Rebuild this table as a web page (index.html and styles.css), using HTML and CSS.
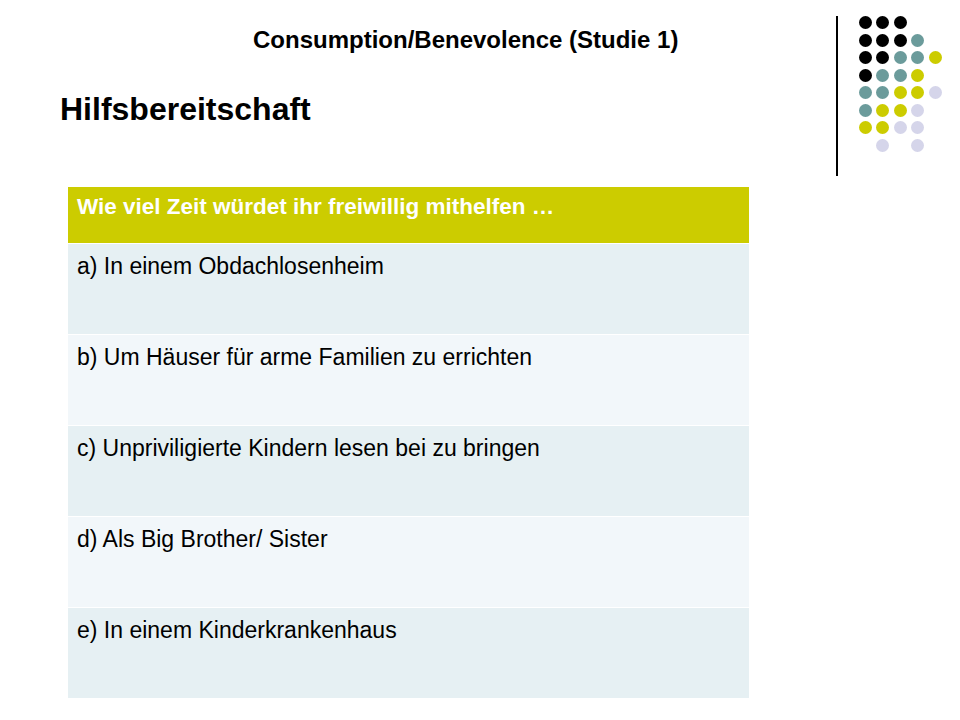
FILE: index.html
```html
<!DOCTYPE html>
<html lang="de">
<head>
<meta charset="utf-8">
<title>Consumption/Benevolence (Studie 1)</title>
<link rel="stylesheet" href="styles.css">
</head>
<body>
<div class="slide">
  <header class="top">
    <div class="titles">
      <h2 class="subtitle"><span class="txt">Consumption/Benevolence (Studie 1)</span></h2>
      <h1 class="title"><span class="txt">Hilfsbereitschaft</span></h1>
    </div>
    <div class="deco">
      <div class="vline"></div>
      <div class="dots">
        <span class="d k"></span><span class="d k"></span><span class="d k"></span><span class="d"></span><span class="d"></span>
        <span class="d k"></span><span class="d k"></span><span class="d k"></span><span class="d t"></span><span class="d"></span>
        <span class="d k"></span><span class="d k"></span><span class="d t"></span><span class="d t"></span><span class="d y"></span>
        <span class="d k"></span><span class="d t"></span><span class="d t"></span><span class="d y"></span><span class="d"></span>
        <span class="d t"></span><span class="d t"></span><span class="d y"></span><span class="d y"></span><span class="d l"></span>
        <span class="d t"></span><span class="d y"></span><span class="d y"></span><span class="d l"></span><span class="d"></span>
        <span class="d y"></span><span class="d y"></span><span class="d l"></span><span class="d l"></span><span class="d"></span>
        <span class="d"></span><span class="d l"></span><span class="d"></span><span class="d l"></span><span class="d"></span>
      </div>
    </div>
  </header>
  <div class="table">
    <div class="row head"><span class="txt">Wie viel Zeit würdet ihr freiwillig mithelfen …</span></div>
    <div class="row odd"><span class="txt">a) In einem Obdachlosenheim</span></div>
    <div class="row even"><span class="txt">b) Um Häuser für arme Familien zu errichten</span></div>
    <div class="row odd"><span class="txt">c) Unpriviligierte Kindern lesen bei zu bringen</span></div>
    <div class="row even"><span class="txt">d) Als Big Brother/ Sister</span></div>
    <div class="row odd"><span class="txt">e) In einem Kinderkrankenhaus</span></div>
  </div>
</div>
</body>
</html>
```

FILE: styles.css
```css
html, body {
  margin: 0;
  padding: 0;
  background: #ffffff;
}
body {
  font-family: "Liberation Sans", Arial, sans-serif;
  color: #000;
}
.slide {
  width: 960px;
  height: 720px;
  position: relative;
  overflow: hidden;
}
.txt {
  display: inline-block;
  white-space: nowrap;
}
.top {
  display: flex;
  height: 187px;
}
.titles {
  width: 776px;
}
.subtitle {
  margin: 26px 0 0 0;
  padding-left: 253px;
  font-size: 24px;
  line-height: 28px;
  font-weight: bold;
}
.title {
  margin: 37px 0 0 0;
  padding-left: 60px;
  font-size: 32px;
  line-height: 37px;
  font-weight: bold;
}
.deco {
  display: flex;
  padding-top: 16px;
}
.vline {
  width: 1.5px;
  height: 160px;
  background: #000;
  margin-left: 60px;
}
.dots {
  display: grid;
  grid-template-columns: repeat(5, 13px);
  grid-auto-rows: 13px;
  column-gap: 4.6px;
  row-gap: 4.5px;
  margin-left: 21px;
}
.d {
  width: 13px;
  height: 13px;
  border-radius: 50%;
}
.d.k { background: #000000; }
.d.t { background: #6b9b9b; }
.d.y { background: #cccc00; }
.d.l { background: #d5d5ea; }
.table {
  margin-left: 68px;
  width: 681px;
  display: flex;
  flex-direction: column;
}
.row {
  box-sizing: border-box;
  padding: 9px 9px 0 9px;
  font-size: 23px;
  line-height: 27px;
  border-bottom: 1px solid #ffffff;
}
.head {
  height: 57px;
  background: #cccc00;
  color: #ffffff;
  font-weight: bold;
  font-size: 22.5px;
  line-height: 26px;
  padding-top: 7px;
}
.odd {
  height: 91px;
  background: #e6f0f3;
}
.even {
  height: 91px;
  background: #f2f7fa;
}
```
